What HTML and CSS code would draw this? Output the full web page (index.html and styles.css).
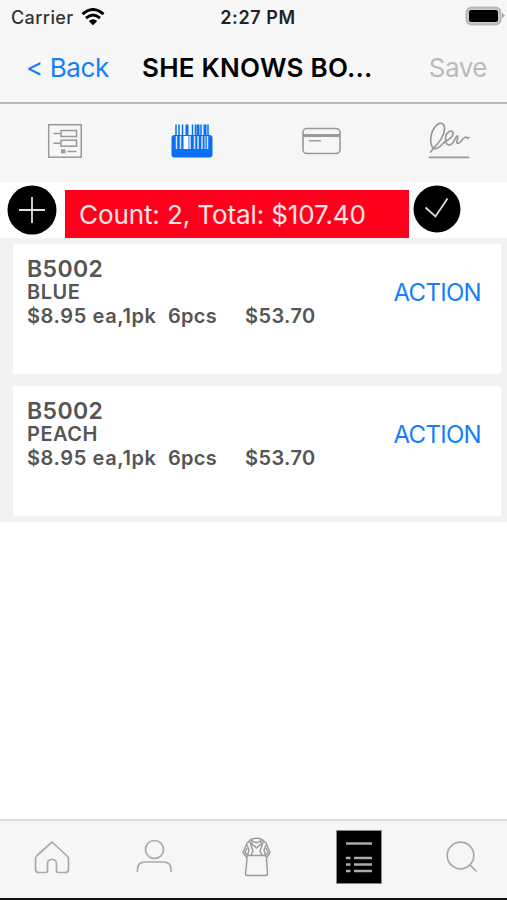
FILE: index.html
```html
<!DOCTYPE html>
<html lang="en">
<head>
  <meta charset="UTF-8">
  <title>Order</title>
  <link rel="stylesheet" href="styles.css">
</head>
<body>
  <header class="top">
    <div class="status">
      <span class="carrier">Carrier
        <svg class="wifi" width="24" height="18" viewBox="0 0 24 18">
          <path d="M1.5 6.2Q12-3.2 22.5 6.2M5 10.2Q12 4 19 10.2" fill="none" stroke="#000" stroke-width="2.9"/>
          <path d="M7.8 13Q12 9.5 16.2 13L12 17.2z"/>
        </svg>
      </span>
      <span class="time">2:27 PM</span>
      <svg class="battery" width="40" height="20" viewBox="0 0 40 20">
        <rect x="1.500" y="1.500" width="34" height="17" rx="5" fill="#ccc" stroke="#b8b8b8" stroke-width="2"/>
        <rect x="4" y="4" width="29" height="12" rx="2"/>
        <path d="M37 6.500l3 3-3 3z" fill="#aaa"/>
      </svg>
    </div>
    <div class="nav">
      <a class="back">&lt; Back</a>
      <h1>SHE KNOWS BO...</h1>
      <a class="save">Save</a>
    </div>
  </header>

  <div class="steps">
    <svg width="36" height="36" viewBox="0 0 36 36" fill="none" stroke="#999" stroke-width="1.5">
      <rect x="1.700" y="1.700" width="32.500" height="32.500"/>
      <path d="M6.500 10.500h7M6.500 20.200h7"/>
      <rect x="14" y="7.500" width="15.500" height="6"/>
      <rect x="14" y="17.200" width="15.500" height="6"/>
      <rect x="14" y="26.300" width="4.500" height="4" fill="#999" stroke="none"/>
      <path d="M20.500 28.500h9"/>
    </svg>
    <svg class="scan" width="42" height="36" viewBox="0 0 42 36">
      <rect x="0.500" y="12" width="41" height="22.500" rx="3" fill="#0a6ff5"/>
      <path d="M5 1.500v11M8 1.500v11M11.500 1.500v11M21.500 1.500v11M24.500 1.500v11M30 1.500v11M37 1.500v11" stroke="#0a6ff5" stroke-width="1.500"/>
      <path d="M16 1.500v11M34 1.500v11M27 1.500v11" stroke="#0a6ff5" stroke-width="3"/>
      <path d="M5.500 13v13M9.500 13v13M19 13v13M23.500 13v13M27 13v13M31 13v13M36.500 13v13" stroke="#d6e8ff" stroke-width="1.500"/>
      <path d="M15 13v13" stroke="#fff" stroke-width="5"/>
      <path d="M34 13v13" stroke="#d6e8ff" stroke-width="1"/>
    </svg>
    <svg width="40" height="36" viewBox="0 0 40 36" fill="none" stroke="#999" stroke-width="1.600">
      <rect x="2" y="5.500" width="37" height="25" rx="4"/>
      <path d="M2 12.500h37" stroke-width="3"/>
      <path d="M8 17.800h12" stroke-width="1.400"/>
    </svg>
    <svg width="42" height="40" viewBox="0 0 42 40" fill="none" stroke="#999" stroke-width="1.700" stroke-linecap="round" stroke-linejoin="round">
      <path d="M2.500 31C8 24 16.500 17 16.500 7.500C16.500 1 10.500 0.500 6.500 6.500C1.500 14 1.500 25 6 27.500C10 29.500 14 22.500 18 20C22 18 25.500 14.500 25 11.500C24 8 17.500 11 17.500 17.500C17.500 25 22 25.500 25 21.500C27.500 18 28 14.500 29.500 15C31 16 27 22.500 30 22.500C33 22 35 16 38 16C39.500 16 39 18.500 41 16.500"/>
      <path d="M1.500 36.300h39"/>
    </svg>
  </div>

  <div class="summary">
    <svg class="round" width="50" height="50" viewBox="0 0 50 50">
      <circle cx="25" cy="25" r="24.500"/>
      <path d="M12 25h26M25 12v26" stroke="#ddd" stroke-width="1.800"/>
    </svg>
    <div class="total"><span>Count: 2, Total: $107.40</span></div>
    <svg class="round" width="48" height="48" viewBox="0 0 48 48">
      <circle cx="24" cy="24" r="23.500"/>
      <path d="M12.500 22.500l10 9L34.500 13.500" fill="none" stroke="#ddd" stroke-width="1.800"/>
    </svg>
  </div>

  <main class="items">
    <section class="item">
      <div>
        <h2>B5002</h2>
        <p class="color">BLUE</p>
        <p class="price"><span class="unit">$8.95 ea,1pk</span><span class="pcs">6pcs</span><span class="sum">$53.70</span></p>
      </div>
      <a class="action">ACTION</a>
    </section>
    <section class="item">
      <div>
        <h2>B5002</h2>
        <p class="color">PEACH</p>
        <p class="price"><span class="unit">$8.95 ea,1pk</span><span class="pcs">6pcs</span><span class="sum">$53.70</span></p>
      </div>
      <a class="action">ACTION</a>
    </section>
  </main>

  <nav class="tabs">
    <svg width="36" height="36" viewBox="0 0 36 36" fill="none" stroke="#aaa" stroke-width="1.700" stroke-linejoin="round">
      <path d="M18 3L32.500 16.500Q34.500 18 34.500 20V30.500Q34.500 33.500 31.500 33.500H24.500Q22.500 33.500 22.500 31.500V24.500Q22.500 20.500 18 20.500T13.500 24.500V31.500Q13.500 33.500 11.500 33.500H4.500Q1.500 33.500 1.500 30.500V20Q1.500 18 3 16.500Z"/>
    </svg>
    <svg width="36" height="36" viewBox="0 0 36 36" fill="none" stroke="#aaa" stroke-width="1.700">
      <circle cx="18.500" cy="10.500" r="9"/>
      <path d="M1.500 33V30.500Q1.500 23 9 23H27.500Q35 23 35 30.500V33"/>
    </svg>
    <svg width="32" height="42" viewBox="0 0 32 42" fill="none" stroke="#999" stroke-width="1.400" stroke-linejoin="round">
      <path d="M11 3.500Q16.500 1 22 3.500L26 7L30 16.500L26.500 22V23L27.500 38Q27.500 39.500 26 39.500H7Q5.500 39.500 5.500 38L7 23V22L3 16.500L7 7Z"/>
      <path d="M12 3.500V8L16.500 12L21 8V3.500M12.500 5Q16.500 8 20.500 5M9.500 5L13 15L11 19M23.500 5L20 15L22 19M7 19.500H26M7 9L9 14L7 21M26 9L24 14L26 21M7 12L5 16.500L8 20M26 12L28 16.500L25 20"/>
    </svg>
    <svg class="list" width="46" height="54" viewBox="0 0 46 54">
      <rect width="46" height="54" fill="#aaa"/>
      <rect x="0.800" y="0.800" width="44.400" height="52.400"/>
      <path d="M10 13.500h26M18 28h18M18 34.500h18M18 41h18M10 28h4.500M10 34.500h4.500M10 41h4.500" stroke="#aaa" stroke-width="2.600"/>
    </svg>
    <svg class="search" width="34" height="34" viewBox="0 0 34 34" fill="none" stroke="#aaa" stroke-width="1.700">
      <circle cx="15.500" cy="15.500" r="13.300"/>
      <path d="M24.500 24.500l7 7"/>
    </svg>
  </nav>
</body>
</html>
```
FILE: styles.css
```css
* { box-sizing: border-box; }
body {
  margin: 0;
  height: 900px;
  display: flex;
  flex-direction: column;
  font-family: Inter, "Liberation Sans", sans-serif;
  background-color: #fff;
  overflow: hidden;
}
h1, h2, p { margin: 0; }
svg { display: block; flex: none; }
.top {
  height: 104px;
  background-color: #f7f7f7;
  border-bottom: 2px solid #bbb;
}
.status {
  height: 34px;
  display: grid;
  grid-template-columns: 1fr auto 1fr;
  align-items: center;
  padding: 0 2px 0 11px;
  font-size: 18px;
}
.carrier {
  display: flex;
  align-items: center;
  gap: 7px;
  color: #333;
  font-weight: 500;
  letter-spacing: 0.4px;
}
.time {
  color: #222;
  font-weight: 600;
  letter-spacing: 0.6px;
}
.battery { justify-self: end; margin-top: -2px; }
.nav {
  height: 66px;
  display: flex;
  align-items: center;
  padding: 0 20px 0 26px;
  font-size: 26px;
}
.back { width: 116px; color: #167efb; letter-spacing: -0.4px; }
.nav h1 { flex: 1; font-size: 26px; font-weight: 600; letter-spacing: 0.25px; }
.save { color: #bbb; letter-spacing: -0.5px; }
.back, .nav h1, .save { white-space: nowrap; }
.steps {
  height: 78px;
  flex: none;
  display: flex;
  justify-content: space-between;
  align-items: center;
  padding: 0 37px 4px 47px;
  background-color: #f6f6f6;
}
.scan { margin-left: 1px; }
.summary {
  height: 56px;
  flex: none;
  display: flex;
  align-items: flex-start;
  padding: 3px 0 0 7px;
}
.total {
  width: 344px;
  height: 48px;
  margin: 5px 4px 0 8px;
  padding-left: 14px;
  line-height: 49px;
  background-color: #ff001c;
  color: #ffe3e5;
  font-size: 26px;
  letter-spacing: -0.1px;
  white-space: nowrap;
}
.items {
  display: flex;
  flex-direction: column;
  gap: 12px;
  padding: 6px 6px 6px 13px;
  background-color: #f2f2f2;
}
.item {
  height: 130px;
  display: flex;
  justify-content: space-between;
  padding: 12px 20px 0 14px;
  border-radius: 2px;
  background-color: #fff;
  color: #555;
  font-weight: 600;
}
.item h2 { font-size: 23px; line-height: 26px; font-weight: 600; letter-spacing: 0.4px; }
.color { font-size: 20px; line-height: 20px; letter-spacing: 0.5px; }
.price { display: flex; font-size: 20px; line-height: 28px; white-space: nowrap; }
.unit { width: 141px; letter-spacing: 0.6px; }
.pcs { width: 77px; letter-spacing: 0.3px; }
.sum { letter-spacing: 0.4px; }
.action {
  padding-top: 22px;
  color: #167efb;
  font-size: 24px;
  font-weight: 400;
  line-height: 30px;
  letter-spacing: -0.7px;
}
.tabs {
  height: 81px;
  flex: none;
  margin-top: auto;
  display: grid;
  grid-template-columns: repeat(5, 102px);
  justify-items: center;
  align-items: center;
  padding: 0 0 6px 1px;
  border-top: 2px solid #ddd;
  border-bottom: 2px solid #111;
  background-color: #f6f6f6;
}
.list { margin-left: 2px; }
.search { margin-left: 4px; }
```
